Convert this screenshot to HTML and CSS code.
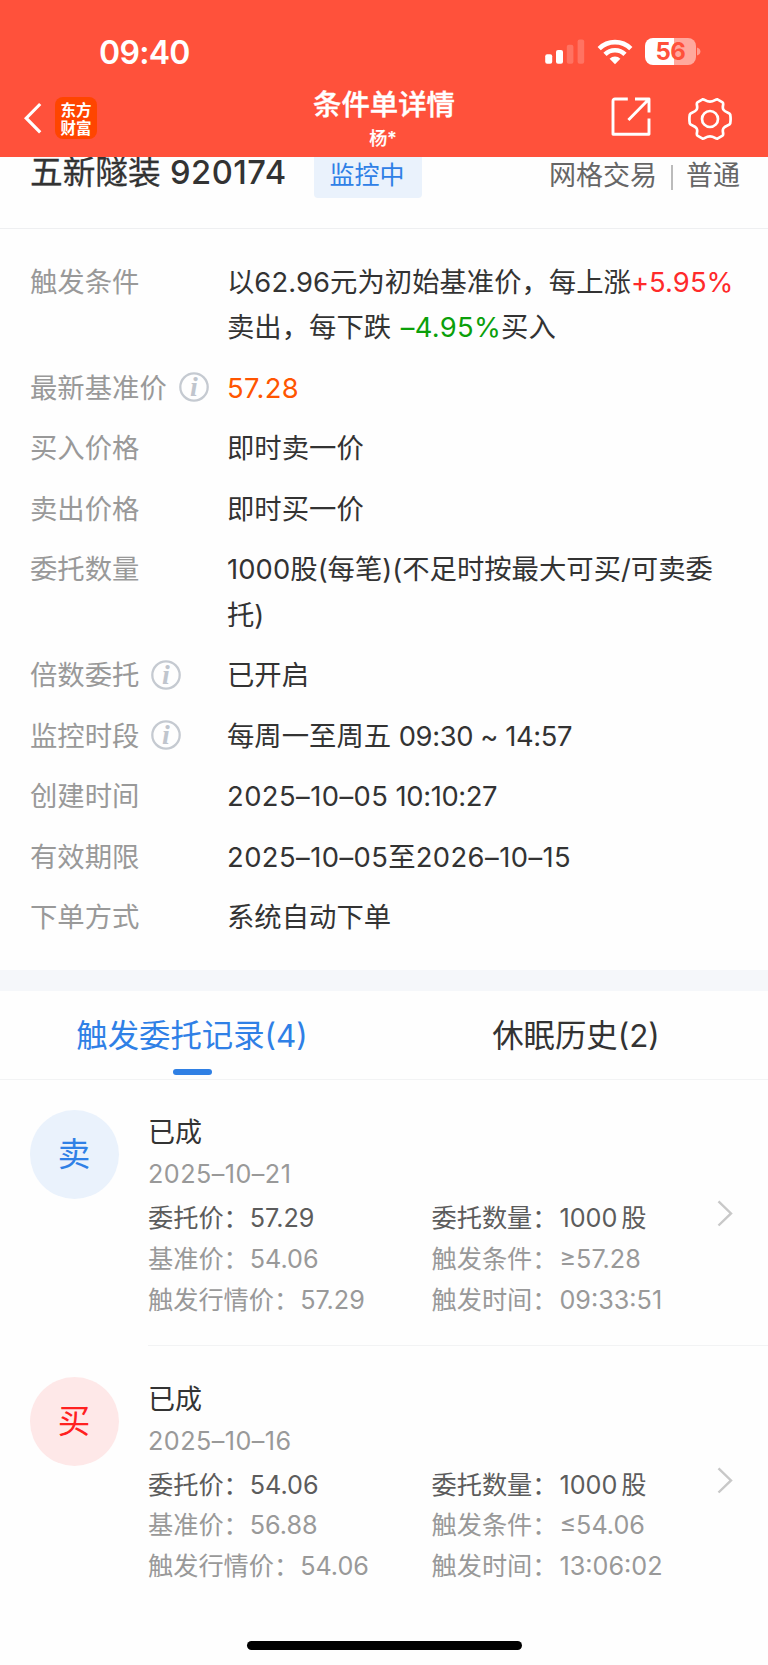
FILE: index.html
```html
<!DOCTYPE html>
<html lang="zh-CN">
<head>
<meta charset="utf-8">
<title>条件单详情</title>
<link rel="stylesheet" href="styles.css">
</head>
<body>
<div class="screen">
  <header class="header">
    <div class="status">
      <div class="clock">09:40</div>
      <div class="status-icons">
        <svg class="signal" width="40" height="26" viewBox="0 0 40 26" fill="#fff"><rect x="0.2" y="15.2" width="7" height="9.5" rx="2"/><rect x="11" y="11" width="7" height="13.7" rx="2"/><rect x="21.8" y="5.8" width="6.6" height="18.9" rx="2" opacity=".2"/><rect x="32.6" y="0.5" width="6.6" height="24.2" rx="2" opacity=".2"/></svg>
        <svg class="wifi" width="36" height="26" viewBox="0 0 36 26" fill="none" stroke="#fff" stroke-width="4.6"><path d="M2.2 9.6A22.4 22.4 0 0 1 33.8 9.6"/><path d="M8 15.3A14.2 14.2 0 0 1 28 15.3"/><path d="M18 25.2L12.6 19.8A7.7 7.7 0 0 1 23.4 19.8Z" fill="#fff" stroke="none"/></svg>
        <div class="battery"><span class="battery-level">56</span></div>
        <svg class="nub" width="4" height="9" viewBox="0 0 4 9"><path d="M0 0.5Q3.4 1.6 3.4 4.5T0 8.5Z" fill="#ff9c90"/></svg>
      </div>
    </div>
    <div class="nav">
      <div class="nav-left">
        <svg width="18" height="32" viewBox="0 0 18 32" fill="none" stroke="#fff" stroke-width="3.2"><path d="M16.2 2L2.2 16.2L16.2 30.4"/></svg>
        <div class="app">东方<br>财富</div>
      </div>
      <div class="nav-title"><h1>条件单详情</h1><p>杨*</p></div>
      <div class="nav-right">
        <svg width="40" height="40" viewBox="0 0 40 40" fill="none" stroke="#fff" stroke-width="2.9" stroke-linejoin="round"><path d="M16.8 2H4.2A2 2 0 0 0 2 4.2V37.3H38V21.6"/><path d="M24 2H38V15.5M37.5 2.5L17.4 23"/></svg>
        <svg width="44" height="44" viewBox="-22 -22 44 44" fill="none" stroke="#fff" stroke-width="2.7" stroke-linejoin="round"><circle r="8"/><path d="M-7.4 -19.6C-5.4 -20 -4.4 -17.4 0 -17.4S5.4 -20 7.4 -19.6L12.6 -16.6C14.4 -15 11.6 -12.4 13.4 -9.4S19.4 -6.6 20.2 -4.6Q21 0 20.2 4.6C19.4 6.6 15.2 6.4 13.4 9.4S14.4 15 12.6 16.6L7.4 19.6C5.4 20 4.4 17.4 0 17.4S-5.4 20 -7.4 19.6L-12.6 16.6C-14.4 15 -11.6 12.4 -13.4 9.4S-19.4 6.6 -20.2 4.6Q-21 0 -20.2 -4.6C-19.4 -6.6 -15.2 -6.4 -13.4 -9.4S-14.4 -15 -12.6 -16.6Z"/></svg>
      </div>
    </div>
  </header>

  <section class="stock">
    <div class="stock-name">五新隧装 <span class="code">920174</span></div>
    <div class="tag">监控中</div>
    <div class="kind"><span>网格交易</span><i></i><span>普通</span></div>
  </section>

  <dl class="details">
    <dt>触发条件</dt><dd>以<b>62.96</b>元为初始基准价，每上涨<b class="up">+5.95%</b><br>卖出，每下跌 <b class="down">–4.95%</b>买入</dd>
    <dt>最新基准价<svg class="info" viewBox="0 0 30 30"><circle cx="15" cy="15" r="13.7"/><text x="14.8" y="24.2">i</text></svg></dt><dd class="orange"><b>57.28</b></dd>
    <dt>买入价格</dt><dd>即时卖一价</dd>
    <dt>卖出价格</dt><dd>即时买一价</dd>
    <dt>委托数量</dt><dd><b>1000</b>股(每笔)(不足时按最大可买/可卖委<br>托)</dd>
    <dt>倍数委托<svg class="info" viewBox="0 0 30 30"><circle cx="15" cy="15" r="13.7"/><text x="14.8" y="24.2">i</text></svg></dt><dd>已开启</dd>
    <dt>监控时段<svg class="info" viewBox="0 0 30 30"><circle cx="15" cy="15" r="13.7"/><text x="14.8" y="24.2">i</text></svg></dt><dd>每周一至周五 <b class="time">09:30 ~ 14:57</b></dd>
    <dt>创建时间</dt><dd><b class="day">2025–10–05</b><b class="time"> 10:10:27</b></dd>
    <dt>有效期限</dt><dd><b class="day">2025–10–05</b>至<b class="day">2026–10–15</b></dd>
    <dt>下单方式</dt><dd>系统自动下单</dd>
  </dl>

  <nav class="tabs">
    <div class="tab active">触发委托记录(4)</div>
    <div class="tab">休眠历史(2)</div>
  </nav>

  <main class="records">
    <article class="record">
      <div class="side sell">卖</div>
      <div class="record-body">
        <div class="state">已成</div>
        <div class="date">2025–10–21</div>
        <div class="grid">
          <div class="dark">委托价：<b>57.29</b></div><div class="dark">委托数量：<b>1000</b><span class="unit">股</span></div>
          <div>基准价：<b>54.06</b></div><div>触发条件：<b>≥57.28</b></div>
          <div>触发行情价：<b>57.29</b></div><div>触发时间：<b>09:33:51</b></div>
        </div>
        <svg class="arrow" width="16" height="27" viewBox="0 0 16 27"><path d="M1.5 1.3L14 13.4L1.5 25.5"/></svg>
      </div>
    </article>
    <article class="record">
      <div class="side buy">买</div>
      <div class="record-body">
        <div class="state">已成</div>
        <div class="date">2025–10–16</div>
        <div class="grid">
          <div class="dark">委托价：<b>54.06</b></div><div class="dark">委托数量：<b>1000</b><span class="unit">股</span></div>
          <div>基准价：<b>56.88</b></div><div>触发条件：<b>≤54.06</b></div>
          <div>触发行情价：<b>54.06</b></div><div>触发时间：<b>13:06:02</b></div>
        </div>
        <svg class="arrow" width="16" height="27" viewBox="0 0 16 27"><path d="M1.5 1.3L14 13.4L1.5 25.5"/></svg>
      </div>
    </article>
  </main>
  <div class="home"></div>
</div>
</body>
</html>
```
FILE: styles.css
```css
* { box-sizing: border-box; margin: 0; padding: 0; }
body { background: #fff; color: #333; font-family: Inter, "Noto Sans CJK SC", sans-serif; }
b { font-weight: 400; }
.screen { width: 768px; height: 1665px; overflow: hidden; display: flex; flex-direction: column; background: #fefefe; }

.header { height: 157px; flex: none; background: #ff513b; color: #fff; }
.status { height: 84px; padding: 34px 67px 0 99px; display: flex; justify-content: space-between; }
.clock { font-size: 32px; line-height: 38px; font-weight: 600; letter-spacing: -.7px; }
.status-icons { display: flex; padding-top: 4px; }
.signal { margin-top: 1px; }
.wifi { margin-left: 12px; margin-top: 1px; }
.battery { width: 51px; height: 27px; margin-left: 12px; border-radius: 8px; background: linear-gradient(90deg, #fff 29px, #ffa89d 29px); text-align: center; }
.battery-level { font-size: 24px; line-height: 28px; font-weight: 700; color: #ff513b; display: block; letter-spacing: -.5px; }
.nub { margin: 9px 0 0 1px; }
.nav { height: 73px; display: grid; grid-template-columns: 1fr auto 1fr; }
.nav-left { display: flex; align-items: flex-start; padding: 13px 0 0 24px; gap: 13px; }
.nav-left svg { margin-top: 5px; }
.app { width: 42px; height: 42px; border-radius: 8px; background: #ff4500; padding-top: 3px; text-align: center; font: 700 15.5px/18px "Noto Sans CJK SC", sans-serif; }
.nav-title { text-align: center; }
.nav-title h1 { font-size: 28.4px; line-height: 41px; font-weight: 500; -webkit-text-stroke: .4px #fff; }
.nav-title p { font-size: 18px; line-height: 28px; font-weight: 500; -webkit-text-stroke: .2px #fff; padding-right: 2px; }
.nav-right { display: flex; justify-content: flex-end; gap: 37px; padding: 12px 36px 0 0; }
.nav-right svg { margin-top: 1px; }

.stock { height: 72px; flex: none; overflow: hidden; display: flex; align-items: flex-start; padding: 0 28px 0 30px; border-bottom: 1px solid #eeeff1; }
.stock-name { font-size: 32.7px; line-height: 40px; margin-top: -5px; width: 284px; white-space: nowrap; -webkit-text-stroke: .3px #333; }
.code { font-weight: 450; letter-spacing: .5px; -webkit-text-stroke: 0; }
.tag { width: 108px; height: 41px; border-radius: 0 0 4px 4px; background: #eaf2fc; color: #2f80e6; font-size: 25px; line-height: 36px; padding-right: 2px; text-align: center; }
.kind { margin-left: auto; display: flex; align-items: center; font-size: 27px; line-height: 38px; color: #666; }
.kind i { width: 2px; height: 25px; background: #bbb; margin: 2px 13px 0 14px; }

.details { display: grid; grid-template-columns: 197px 1fr; row-gap: 15.2px; align-content: start; height: 741px; flex: none; padding: 31px 0 0 30px; font-size: 27.35px; line-height: 45.35px; white-space: nowrap; }
dt { color: #999; display: flex; align-items: center; height: 45.35px; }
.info { width: 30px; height: 30px; margin-left: 12px; margin-top: -3px; }
.info circle { fill: none; stroke: #c5cad1; stroke-width: 2.3; }
.info text { font: italic 700 28px "Liberation Serif", serif; fill: #c0c5cd; text-anchor: middle; }
.details b { letter-spacing: .1px; }
.details .down { margin-left: 2px; letter-spacing: .3px; }
.orange b { letter-spacing: .4px; }
.details .day { letter-spacing: .45px; }
.details .time { letter-spacing: -.4px; white-space: pre; }
.orange { color: #ff5500; }
.up { color: #ff2a2a; }
.down { color: #0a9f0a; }

.tabs { height: 110px; flex: none; border-top: 21px solid #f5f7fa; border-bottom: 1px solid #f2f3f4; display: grid; grid-template-columns: 1fr 1fr; font-size: 31.4px; }
.tab { display: flex; flex-direction: column; align-items: center; line-height: 78px; padding-top: 6px; }
.active { color: #2f80e6; }
.active::after { content: ""; width: 39px; height: 6px; margin-top: -6px; border-radius: 3px; background: #3080e4; }

.record { display: flex; height: 266.5px; padding-left: 30px; }
.side { width: 89px; height: 89px; margin-top: 30px; border-radius: 50%; font-size: 32.5px; line-height: 90px; padding-right: 1px; text-align: center; flex: none; }
.sell { background: #eaf2fc; color: #2f80e6; }
.buy { background: #fee8e8; color: #ff2020; }
.record-body { position: relative; flex: 1; margin: 0 0 1px 29px; padding-top: 31px; border-bottom: 1px solid #f2f3f4; font-size: 25.2px; white-space: nowrap; }
.record:last-child .record-body { border: 0; }
.state { font-size: 27px; line-height: 44px; }
.date { line-height: 38px; color: #999; letter-spacing: .45px; }
.grid { display: grid; grid-template-columns: 283.5px 1fr; line-height: 40.8px; margin-top: 5px; color: #999; }
.grid div:nth-child(even) b { margin-left: 2px; }
.grid div:nth-child(odd) b { margin-left: 1px; }
.dark { color: #5c5c5c; }
.unit { margin-left: 4px; }
.arrow { position: absolute; left: 569px; top: 120px; fill: none; stroke: #c8c8c8; stroke-width: 2.4; }
.home { width: 275px; height: 9px; border-radius: 5px; background: #000; margin: 28px auto 0; flex: none; }
```
